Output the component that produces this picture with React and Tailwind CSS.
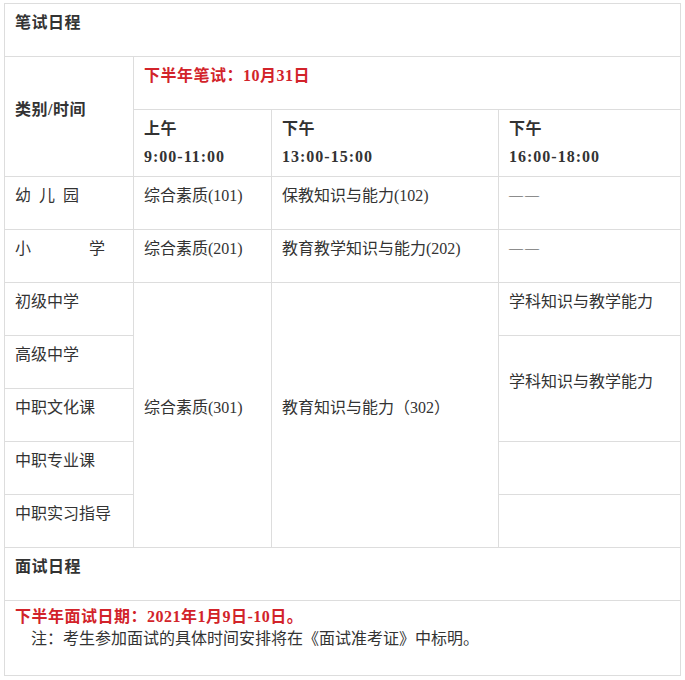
import React from 'react';

function Cell({ className = '', children }) {
  return (
    <div className={`bg-white px-[10px] py-[5px] flex flex-col justify-center ${className}`}>
      {children}
    </div>
  );
}

function Line({ children, className = '' }) {
  return <p className={`h-[28px] leading-[28px] mb-[14px] whitespace-nowrap ${className}`}>{children}</p>;
}

function TimeHead({ label, range }) {
  return (
    <Cell>
      <div className="font-bold tracking-[0.5px]">
        <p className="h-[28px] leading-[28px]">{label}</p>
        <p className="h-[28px] leading-[28px] tracking-[1px]">{range}</p>
      </div>
    </Cell>
  );
}

// two short dashes with a small gap, as in the source
function Dash() {
  return (
    <Line className="text-[14px]">
      <span className="mr-[2px]">—</span>
      <span>—</span>
    </Line>
  );
}

export default function App() {
  return (
    <div className="min-h-[680px] bg-white pt-[3px] pl-[4px] text-[16px] text-[#333333] font-['Liberation_Serif','Noto_Sans_CJK_SC',serif]">
      <div className="grid grid-cols-[128px_137px_226px_181px] gap-px bg-[#dddddd] p-px w-[677px]">
        {/* 笔试 */}
        <Cell className="col-span-4">
          <Line className="font-bold tracking-[0.5px]">笔试日程</Line>
        </Cell>

        <Cell className="row-span-2">
          <Line className="font-bold tracking-[0.5px]">类别/时间</Line>
        </Cell>
        <Cell className="col-span-3">
          <Line className="font-bold tracking-[0.5px] text-[#d2232a]">下半年笔试：10月31日</Line>
        </Cell>

        <TimeHead label="上午" range="9:00-11:00" />
        <TimeHead label="下午" range="13:00-15:00" />
        <TimeHead label="下午" range="16:00-18:00" />

        <Cell>
          <Line className="[word-spacing:4px]">幼 儿 园</Line>
        </Cell>
        <Cell>
          <Line>综合素质(101)</Line>
        </Cell>
        <Cell>
          <Line>保教知识与能力(102)</Line>
        </Cell>
        <Cell>
          <Dash />
        </Cell>

        <Cell>
          <Line>
            <span className="inline-block w-[74px]">小</span>学
          </Line>
        </Cell>
        <Cell>
          <Line>综合素质(201)</Line>
        </Cell>
        <Cell>
          <Line>教育教学知识与能力(202)</Line>
        </Cell>
        <Cell>
          <Dash />
        </Cell>

        <Cell>
          <Line>初级中学</Line>
        </Cell>
        <Cell className="row-span-5">
          <Line>综合素质(301)</Line>
        </Cell>
        <Cell className="row-span-5">
          <Line>教育知识与能力（302）</Line>
        </Cell>
        <Cell>
          <Line>学科知识与教学能力</Line>
        </Cell>

        <Cell>
          <Line>高级中学</Line>
        </Cell>
        <Cell className="row-span-2">
          <Line>学科知识与教学能力</Line>
        </Cell>

        <Cell>
          <Line>中职文化课</Line>
        </Cell>

        <Cell>
          <Line>中职专业课</Line>
        </Cell>
        <Cell />

        <Cell>
          <Line>中职实习指导</Line>
        </Cell>
        <Cell />

        {/* 面试 */}
        <Cell className="col-span-4">
          <Line className="font-bold tracking-[0.5px]">面试日程</Line>
        </Cell>
        <Cell className="col-span-4">
          <div className="mb-[20px]">
            <p className="h-[22px] leading-[22px] font-bold tracking-[0.5px] text-[#d2232a]">
              下半年面试日期：2021年1月9日-10日。
            </p>
            <p className="h-[22px] leading-[22px] pl-[16px]">
              注：考生参加面试的具体时间安排将在《面试准考证》中标明。
            </p>
          </div>
        </Cell>
      </div>
    </div>
  );
}
